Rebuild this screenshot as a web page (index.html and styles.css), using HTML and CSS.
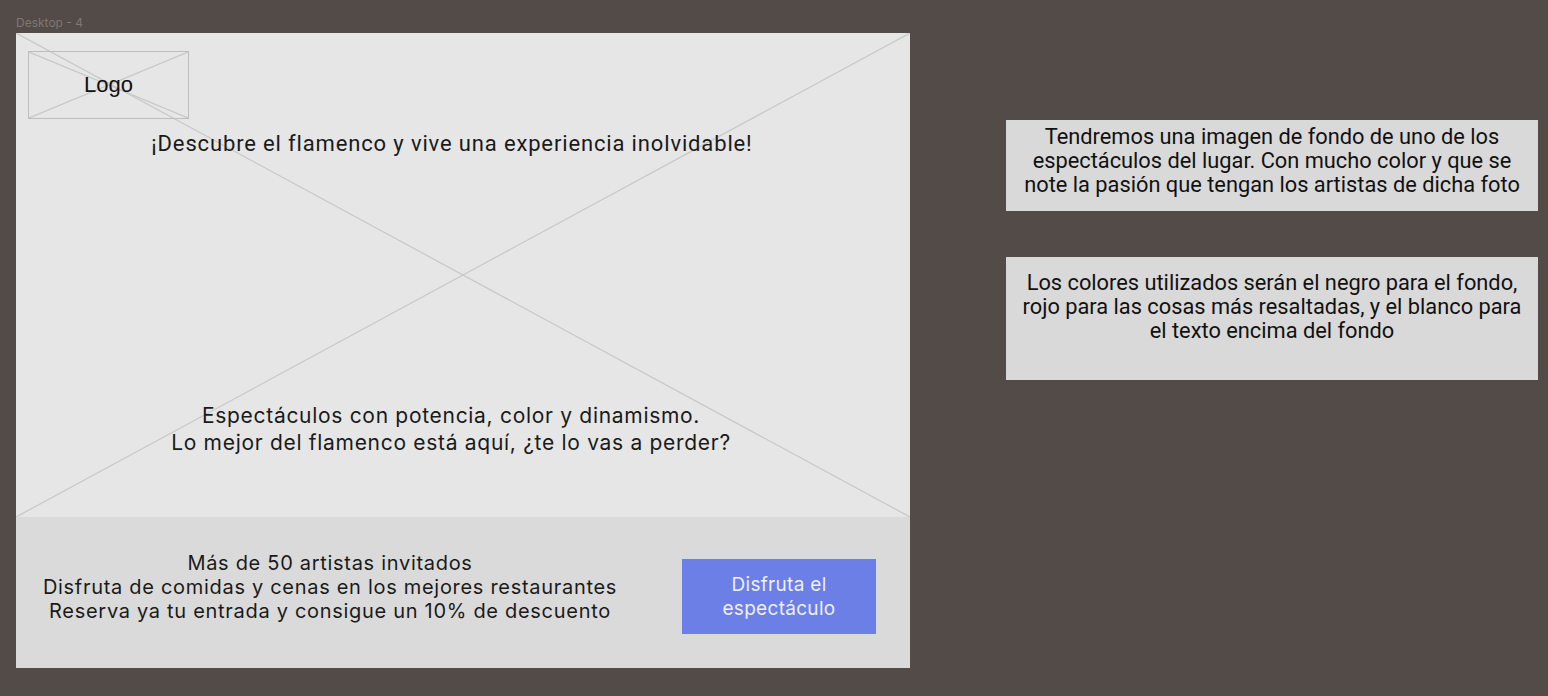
FILE: index.html
```html
<!DOCTYPE html>
<html lang="es">
<head>
    <meta charset="UTF-8">
    <meta name="viewport" content="width=device-width, initial-scale=1.0">
    <title>Desktop - 4</title>
    <link rel="stylesheet" href="styles.css">
</head>
<body>
    <div class="canvas">
        <div class="board">
            <div class="frame-label">Desktop - 4</div>
            <div class="frame">
                <div class="hero">
                    <!-- imagen de fondo (placeholder) -->
                    <svg class="cross" viewBox="0 0 100 100" preserveAspectRatio="none">
                        <line x1="0" y1="0" x2="100" y2="100" />
                        <line x1="100" y1="0" x2="0" y2="100" />
                    </svg>
                    <div class="logo">
                        <svg class="cross" viewBox="0 0 100 100" preserveAspectRatio="none">
                            <line x1="0" y1="0" x2="100" y2="100" />
                            <line x1="100" y1="0" x2="0" y2="100" />
                        </svg>
                        <span>Logo</span>
                    </div>
                    <h1 class="headline">¡Descubre el flamenco y vive una experiencia inolvidable!</h1>
                    <p class="tagline">Espectáculos con potencia, color y dinamismo.<br>Lo mejor del flamenco está aquí, ¿te lo vas a perder?</p>
                </div>
                <div class="info">
                    <p class="info-text">Más de 50 artistas invitados<br>Disfruta de comidas y cenas en los mejores restaurantes<br>Reserva ya tu entrada y consigue un 10% de descuento</p>
                    <button class="cta">Disfruta el<br>espectáculo</button>
                </div>
            </div>
        </div>
        <div class="notes">
            <div class="note note-first">Tendremos una imagen de fondo de uno de los espectáculos del lugar. Con mucho color y que se note la pasión que tengan los artistas de dicha foto</div>
            <div class="note note-second">Los colores utilizados serán el negro para el fondo, rojo para las cosas más resaltadas, y el blanco para el texto encima del fondo</div>
        </div>
    </div>
</body>
</html>
```

FILE: styles.css
```css
html, body {
    margin: 0;
    padding: 0;
    height: 100%;
}
body {
    background-color: #534b48;
    font-family: Roboto, "Liberation Sans", Arial, sans-serif;
    color: #1a1a1a;
    overflow: hidden;
}
.canvas {
    display: flex;
    align-items: flex-start;
    padding: 16px 0 0 16px;
}
.board {
    width: 894px;
}
.frame-label {
    font-family: Inter, "Liberation Sans", sans-serif;
    font-size: 12px;
    line-height: 14px;
    color: #7f7775;
    height: 17px;
}
.frame {
    width: 894px;
    height: 635px;
    display: flex;
    flex-direction: column;
}
.cross {
    position: absolute;
    left: 0;
    top: 0;
    width: 100%;
    height: 100%;
}
.cross line {
    stroke: #c9c7c7;
    stroke-width: 1.2;
    vector-effect: non-scaling-stroke;
}
.hero {
    position: relative;
    height: 484px;
    background-color: #e6e6e6;
    display: flex;
    flex-direction: column;
    align-items: center;
    box-sizing: border-box;
    padding: 18px 0 61px;
}
.logo {
    position: relative;
    align-self: flex-start;
    margin-left: 12px;
    width: 161px;
    height: 68px;
    box-sizing: border-box;
    border: 1px solid #bdbdbd;
    display: flex;
    align-items: center;
    justify-content: center;
    font-family: "Liberation Sans", Arial, sans-serif;
    font-size: 22px;
    color: #111;
}
.logo span {
    position: relative;
}
.headline {
    position: relative;
    margin: 13px 22px 0 0;
    font-size: 22px;
    letter-spacing: 0.85px;
    font-weight: 400;
    line-height: 24px;
    color: #1a1a1a;
}
.tagline {
    position: relative;
    margin: auto 24px 0 0;
    font-family: Inter, "Liberation Sans", sans-serif;
    font-size: 21px;
    letter-spacing: 0.7px;
    line-height: 27px;
    text-align: center;
    color: #1a1a1a;
}
.info {
    flex: 1;
    background-color: #dadada;
    display: flex;
    align-items: flex-start;
}
.info-text {
    width: 604px;
    margin: 34px 0 0 12px;
    font-family: Inter, "Liberation Sans", sans-serif;
    font-size: 20px;
    letter-spacing: 0.7px;
    line-height: 24px;
    text-align: center;
    color: #1a1a1a;
}
.cta {
    margin: 42px 0 0 50px;
    width: 194px;
    height: 75px;
    border: none;
    background-color: #6b7fe6;
    color: #eef0fb;
    font-family: Inter, "Liberation Sans", sans-serif;
    font-size: 19px;
    letter-spacing: 0.3px;
    line-height: 24px;
    padding: 0;
    cursor: pointer;
}
.notes {
    margin-left: 96px;
    width: 532px;
    display: flex;
    flex-direction: column;
    gap: 46px;
    padding-top: 104px;
}
.note {
    background-color: #d9d9d9;
    font-size: 21.8px;
    line-height: 24px;
    text-align: center;
    color: #111;
    box-sizing: border-box;
    padding: 5px 10px 0;
}
.note-first {
    height: 91px;
}
.note-second {
    height: 123px;
    padding-top: 14px;
}
```
